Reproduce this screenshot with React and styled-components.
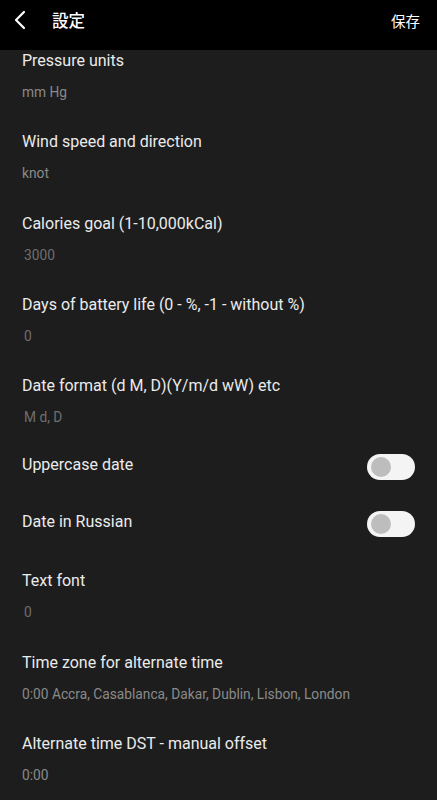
import styled, { createGlobalStyle } from 'styled-components';

const GlobalStyle = createGlobalStyle`
  html, body {
    margin: 0;
    padding: 0;
    background: #1d1d1d;
  }
  body {
    font-family: Roboto, "Noto Sans CJK JP", sans-serif;
  }
`;

const items = [
  { type: 'text', title: 'Pressure units', value: 'mm Hg' },
  { type: 'text', title: 'Wind speed and direction', value: 'knot' },
  { type: 'input', title: 'Calories goal (1-10,000kCal)', value: '3000' },
  { type: 'input', title: 'Days of battery life (0 - %, -1 - without %)', value: '0' },
  { type: 'input', title: 'Date format (d M, D)(Y/m/d wW) etc', value: 'M d, D' },
  { type: 'toggle', title: 'Uppercase date' },
  { type: 'toggle', title: 'Date in Russian' },
  { type: 'input', title: 'Text font', value: '0' },
  { type: 'text', title: 'Time zone for alternate time', value: '0:00 Accra, Casablanca, Dakar, Dublin, Lisbon, London' },
  { type: 'text', title: 'Alternate time DST - manual offset', value: '0:00' },
];

const App = () => {
  return (
    <Page>
      <GlobalStyle />
      <Header>
        <BackButton>
          <svg width="14" height="20" viewBox="0 0 14 20" fill="none">
            <path d="M11 2 L3 10 L11 18" stroke="#fff" strokeWidth="2.2" strokeLinecap="round" strokeLinejoin="round" />
          </svg>
        </BackButton>
        <HeaderTitle>設定</HeaderTitle>
        <SaveButton>保存</SaveButton>
      </Header>
      <Scroller>
        <List>
          {items.map((item) =>
            item.type === 'toggle' ? (
              <ToggleRow key={item.title}>
                <Title>{item.title}</Title>
                <Switch>
                  <Knob />
                </Switch>
              </ToggleRow>
            ) : (
              <Item key={item.title}>
                <Title>{item.title}</Title>
                <Value $input={item.type === 'input'}>{item.value}</Value>
              </Item>
            )
          )}
        </List>
      </Scroller>
    </Page>
  );
};
export default App;

const Page = styled.div`
  width: 437px;
  height: 800px;
  display: flex;
  flex-direction: column;
  background: #1d1d1d;
  overflow: hidden;
`;

const Header = styled.div`
  height: 50px;
  box-sizing: border-box;
  flex-shrink: 0;
  background: #000;
  display: flex;
  align-items: center;
  padding: 0 17px 10px 13px;
`;

const BackButton = styled.div`
  width: 14px;
  height: 20px;
  display: flex;
`;

const HeaderTitle = styled.div`
  margin-left: 25px;
  color: #fff;
  font-size: 16.5px;
  font-weight: 500;
  flex: 1;
`;

const SaveButton = styled.div`
  color: #fff;
  font-size: 14.5px;
`;

const Scroller = styled.div`
  flex: 1;
  overflow: hidden;
`;

// list is scrolled a little under the header
const List = styled.div`
  margin-top: -9px;
  display: flex;
  flex-direction: column;
`;

const Item = styled.div`
  padding: 10px 22px 21.3px;
  display: flex;
  flex-direction: column;
  gap: 12px;
`;

const Title = styled.div`
  color: #ebebeb;
  font-size: 16px;
  line-height: 20px;
`;

const Value = styled.div`
  color: ${(p) => (p.$input ? '#6f6f6f' : '#8a8a8a')};
  font-size: 13.75px;
  line-height: 18px;
  padding-left: ${(p) => (p.$input ? '2px' : '0')};
`;

const ToggleRow = styled.div`
  height: 26px;
  padding: 5px 22px 26px;
  display: flex;
  align-items: center;
  justify-content: space-between;
`;

const Switch = styled.div`
  width: 48px;
  height: 26px;
  border-radius: 13px;
  background: #f4f4f4;
  display: flex;
  align-items: center;
  padding-left: 4px;
  box-sizing: border-box;
  margin-top: 4px;
`;

const Knob = styled.div`
  width: 20px;
  height: 20px;
  border-radius: 50%;
  background: #bdbdbd;
`;
